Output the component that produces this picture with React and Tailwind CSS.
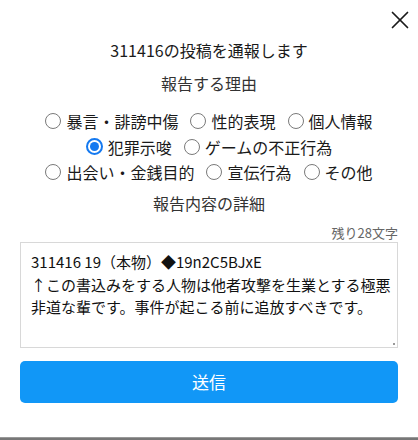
import React from "react";

function Radio({ label, checked }) {
  return (
    <label className="flex items-center gap-[5px]">
      {checked ? (
        <span className="w-[17px] h-[17px] rounded-full border-2 border-[#1479f0] flex items-center justify-center">
          <span className="w-[9px] h-[9px] rounded-full bg-[#1479f0]" />
        </span>
      ) : (
        <span className="w-[16px] h-[16px] rounded-full border border-[#7a7a7a] bg-white" />
      )}
      <span>{label}</span>
    </label>
  );
}

export default function App() {
  const text =
    "311416 19（本物）◆19n2C5BJxE\n↑この書込みをする人物は他者攻撃を生業とする極悪非道な輩です。事件が起こる前に追放すべきです。";
  return (
    <div
      className="w-[418px] h-[440px] bg-white flex flex-col text-[#1a1a1a]"
      style={{ fontFamily: '"Noto Sans CJK JP", "Noto Sans", sans-serif' }}
    >
      <div className="h-[36px] flex justify-end items-start pt-[11px] pr-[9px]">
        <svg width="18" height="18" viewBox="0 0 18 18" fill="none" stroke="#1a1a1a" strokeWidth="1.7" strokeLinecap="round">
          <line x1="1.5" y1="1.5" x2="16.5" y2="16.5" />
          <line x1="16.5" y1="1.5" x2="1.5" y2="16.5" />
        </svg>
      </div>
      <div className="text-center text-[16px] leading-[28px]">311416の投稿を通報します</div>
      <div className="text-center text-[16px] leading-[28px] mt-[5px] text-[#333]">報告する理由</div>
      <div className="mt-[11px] text-[16px] flex flex-col">
        <div className="h-[26px] flex justify-center items-center gap-[12px]">
          <Radio label="暴言・誹謗中傷" />
          <Radio label="性的表現" />
          <Radio label="個人情報" />
        </div>
        <div className="h-[25px] flex justify-center items-center gap-[12px]">
          <Radio label="犯罪示唆" checked />
          <Radio label="ゲームの不正行為" />
        </div>
        <div className="h-[26px] flex justify-center items-center gap-[12px]">
          <Radio label="出会い・金銭目的" />
          <Radio label="宣伝行為" />
          <Radio label="その他" />
        </div>
      </div>
      <div className="text-center text-[16px] leading-[28px] mt-[4px] text-[#333]">報告内容の詳細</div>
      <div className="mt-[7px] px-[20px] flex flex-col">
        <div className="text-right text-[13px] leading-[18px] text-[#666]">残り28文字</div>
        <div className="relative">
          <textarea
            className="block h-[106px] w-full border border-[#d8d8d8] pl-[10px] pr-[4px] pt-[8px] text-[15px] leading-[22.5px] text-[#111] outline-none resize-none"
            style={{ fontFamily: '"Noto Sans CJK JP", "Noto Sans", sans-serif' }}
            defaultValue={text}
          />
          <span className="absolute right-[3px] bottom-[3px] w-[2px] h-[2px] bg-[#999]" />
        </div>
        <button className="mt-[13px] h-[42px] w-full rounded-[5px] bg-[#1197f7] text-white text-[17px]">
          送信
        </button>
      </div>
      <div className="mt-auto h-[3px] bg-[#777] border-t border-[#999]" />
    </div>
  );
}
